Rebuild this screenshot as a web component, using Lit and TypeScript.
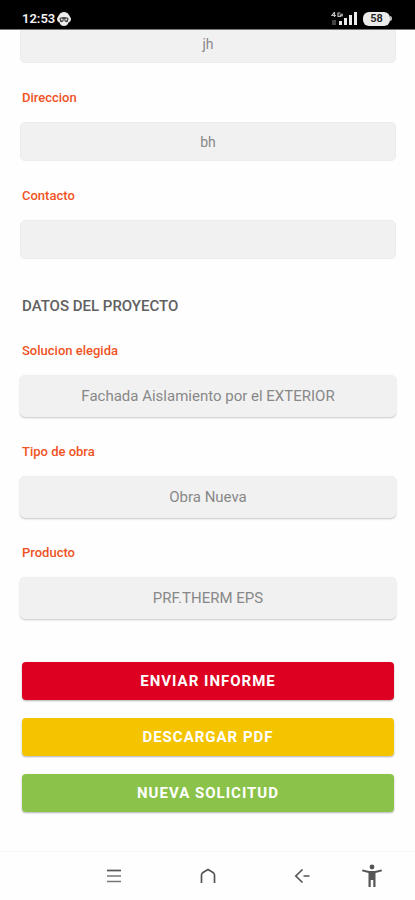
import { LitElement, html, css } from "lit";
import { customElement } from "lit/decorators.js";

@customElement("status-bar")
class StatusBar extends LitElement {
  static styles = css`
    :host {
      display: flex;
      align-items: center;
      justify-content: space-between;
      box-sizing: border-box;
      height: 30px;
      padding: 9px 23px 1px 22px;
      background: #000;
      border-bottom: 1px solid #777;
      color: #f2f2f2;
      position: relative;
      z-index: 1;
    }
    .group {
      display: flex;
      align-items: center;
      gap: 2px;
    }
    .time {
      font-size: 13px;
      line-height: 16px;
      font-weight: 600;
    }
    .battery {
      display: flex;
      align-items: center;
    }
    .level {
      width: 27px;
      border-radius: 6px;
      background: #ececec;
      color: #222;
      font-size: 11px;
      line-height: 14px;
      font-weight: 600;
      text-align: center;
    }
    .tip {
      width: 2px;
      height: 5px;
      border-radius: 0 2px 2px 0;
      background: #bbb;
    }
    .signal {
      margin-right: 3px;
    }
  `;
  render() {
    return html`
      <div class="group">
        <span class="time">12:53</span>
        <svg width="14" height="14" viewBox="0 0 14 14" aria-hidden="true">
          <path d="M7 0C9 0 11 1 12 3L14 6.500C14 9 13 10 11.500 10.500C11 13 9 14 7 14C5 14 3 13 2.500 10.500C1 10 0 9 0 6.500L2 3C3 1 5 0 7 0Z" fill="#ececec"/>
          <path d="M2.500 6Q7 4 11.500 6L11 9.500Q9 11 7.500 9V7.500H6.500V9Q5 11 3 9.500Z" fill="#444"/>
          <circle cx="4.800" cy="7.600" r="1" fill="#ddd"/>
          <circle cx="9.200" cy="7.600" r="1" fill="#ddd"/>
        </svg>
      </div>
      <div class="group">
        <svg class="signal" width="27" height="15" viewBox="0 0 27 15" aria-hidden="true">
          <path d="M3.500 1L1 4.500H5M3.500 1V6M9.500 2H7V5.500H9.500V4H8.500M11 2.500V5.500M9.500 4H12" fill="none" stroke="#bbb" stroke-width="1.200"/>
          <path d="M1 9H5V14H1Z" fill="#444"/>
          <path d="M8 10H11V14H8ZM13 7H16V14H13ZM18 4H21V14H18ZM23 1H26V14H23Z" fill="#ececec"/>
        </svg>
        <div class="battery"><span class="level">58</span><span class="tip"></span></div>
      </div>
    `;
  }
}

@customElement("system-nav")
class SystemNav extends LitElement {
  static styles = css`
    :host {
      display: block;
      border-top: 1px solid #f8f8f8;
    }
    nav {
      display: grid;
      grid-template-columns: 1fr 1fr 1fr;
      align-items: center;
      padding: 0 66px 0 67px;
      position: relative;
    }
    button {
      display: flex;
      align-items: center;
      justify-content: center;
      height: 48px;
      padding: 0;
      border: 0;
      background: none;
    }
    .access {
      position: absolute;
      right: 32px;
      top: 0;
    }
    svg {
      fill: none;
      stroke: #555;
      stroke-width: 1.7;
    }
    .figure {
      fill: #555;
      stroke: none;
    }
  `;
  render() {
    return html`
      <nav aria-label="Sistema">
        <button aria-label="Recientes">
          <svg width="16" height="16" viewBox="0 0 16 16">
            <path d="M1 2.500H15"/><path d="M1 8H15M1 13.500H15" stroke="#777"/>
          </svg>
        </button>
        <button aria-label="Inicio">
          <svg width="16" height="16" viewBox="0 0 16 16">
            <path d="M1.500 15V7Q1.500 5.500 3 4.500L8 1.500L13 4.500Q14.500 5.500 14.500 7V15"/>
          </svg>
        </button>
        <button aria-label="Atrás">
          <svg width="16" height="16" viewBox="0 0 16 16">
            <path d="M8.500 1.500L1.800 8L8.500 14.500M9.500 8H15.500"/>
          </svg>
        </button>
        <button class="access" aria-label="Accesibilidad">
          <svg class="figure" width="22" height="24" viewBox="0 0 22 24">
            <circle cx="11" cy="3" r="2.400"/>
            <path d="M1.500 5.500L8 7H14L20.500 5.500L21 7.200L14.500 9V23H12.300V16H9.700V23H7.500V9L1 7.200Z"/>
          </svg>
        </button>
      </nav>
    `;
  }
}

@customElement("app-root")
class AppRoot extends LitElement {
  static styles = css`
    :host {
      display: flex;
      flex-direction: column;
      min-height: 100vh;
      background: #fefefe;
      font-family: Roboto, sans-serif;
    }
    form {
      flex: 1;
      display: flex;
      flex-direction: column;
      margin-top: -6px;
      padding: 0 19px 24px 20px;
    }
    label {
      margin: 27px 2px 16px;
      color: #f0521f;
      font-size: 13px;
      line-height: 16px;
      font-weight: 500;
    }
    h2 {
      margin: 37px 2px 0;
      color: #606060;
      font-size: 15px;
      line-height: 20px;
      font-weight: 500;
    }
    input,
    select {
      appearance: none;
      box-sizing: border-box;
      width: 100%;
      margin: 0;
      padding: 0 12px;
      border: 1px solid #ececec;
      border-radius: 5px;
      background: #f1f1f1;
      color: #888;
      font-family: inherit;
      text-align: center;
      outline: none;
    }
    input {
      height: 39px;
      font-size: 14px;
    }
    select {
      height: 42px;
      border-color: #f1f1f1;
      font-size: 15px;
      text-align-last: center;
      box-shadow: 0 1px 2px rgba(0, 0, 0, 0.22);
    }
    .actions {
      display: grid;
      gap: 18px;
      margin: 43px 2px 0;
    }
    .action {
      height: 38px;
      padding: 0;
      border: 0;
      border-radius: 4px;
      box-shadow: 0 1px 2px rgba(0, 0, 0, 0.3);
      color: #fff;
      font-family: inherit;
      font-size: 15px;
      font-weight: 700;
      letter-spacing: 1px;
    }
    .send {
      background: #dd0020;
    }
    .download {
      background: #f5c400;
    }
    .renew {
      background: #8bc34a;
    }
  `;
  render() {
    return html`
      <status-bar></status-bar>
      <form>
        <input type="text" aria-label="Nombre" .value=${"jh"} />
        <label for="direccion">Direccion</label>
        <input id="direccion" type="text" .value=${"bh"} />
        <label for="contacto">Contacto</label>
        <input id="contacto" type="text" />
        <h2>DATOS DEL PROYECTO</h2>
        <label for="solucion">Solucion elegida</label>
        <select id="solucion"><option>Fachada Aislamiento por el EXTERIOR</option></select>
        <label for="obra">Tipo de obra</label>
        <select id="obra"><option>Obra Nueva</option></select>
        <label for="producto">Producto</label>
        <select id="producto"><option>PRF.THERM EPS</option></select>
        <div class="actions">
          <button class="action send" type="button">ENVIAR INFORME</button>
          <button class="action download" type="button">DESCARGAR PDF</button>
          <button class="action renew" type="button">NUEVA SOLICITUD</button>
        </div>
      </form>
      <system-nav></system-nav>
    `;
  }
}
